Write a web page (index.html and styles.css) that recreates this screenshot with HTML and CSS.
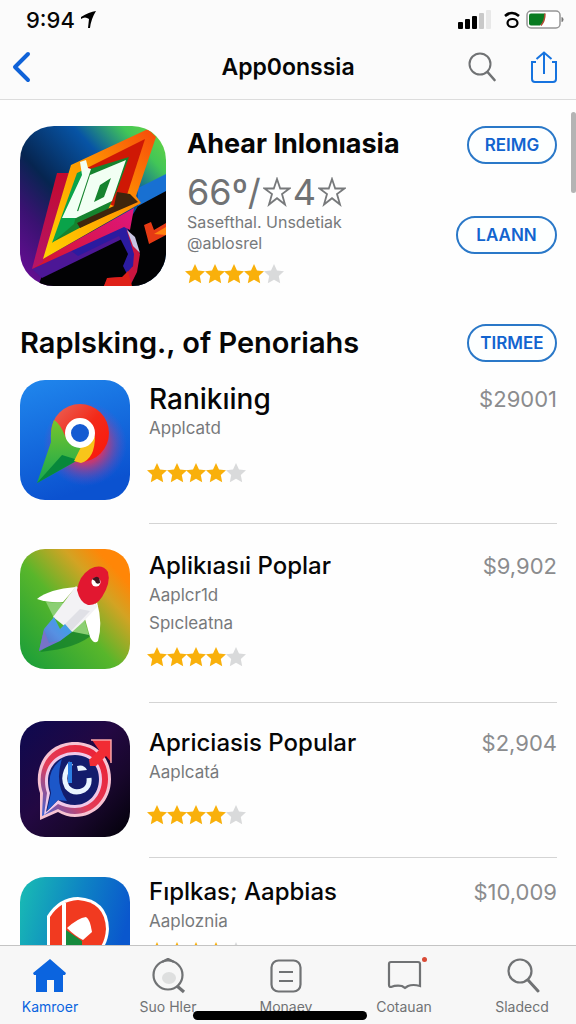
FILE: index.html
```
<!DOCTYPE html>
<html lang="id">
<head>
  <meta charset="UTF-8" />
  <meta name="viewport" content="width=device-width, initial-scale=1.0" />
  <title>App0onssia</title>
  <link rel="stylesheet" href="styles.css">
</head>
<body>
  <!-- shared star shapes -->
  <svg class="sprite" aria-hidden="true">
    <symbol id="star" viewBox="0 0 20 20"><path d="M10 0l3 6.500 7 .8-5.200 4.800 1.400 7.200-6.200-3.600-6.200 3.600 1.400-7.200L0 7.300l7-.8z"/></symbol>
    <symbol id="rating" viewBox="0 0 100 20">
      <g fill="#f9b00b">
        <use href="#star" x="0" width="20" height="20"/>
        <use href="#star" x="20" width="20" height="20"/>
        <use href="#star" x="39" width="20" height="20"/>
        <use href="#star" x="59" width="20" height="20"/>
      </g>
      <use href="#star" x="79" width="20" height="20" fill="#d9dadb"/>
    </symbol>
    <symbol id="star-line" viewBox="0 0 28 30"><path d="M14 2l3.200 9.500H26.500L19 17l3 10.500-8-6.300-8 6.300L9 17 1.500 11.500h9.300z" fill="none" stroke="#77797b" stroke-width="1.800"/></symbol>
  </svg>

  <header class="topbar">
    <div class="status">
      <span class="time">9:94</span>
      <svg class="arrow" viewBox="0 0 16 18"><path d="M0 6Q8 1 15 0 10 8 9 17L7 17 8 8Q4 5 0 8z"/></svg>
      <svg class="signal" viewBox="0 0 34 20">
        <rect x="0" y="12" width="5" height="7" rx="1"/>
        <rect x="7" y="9" width="5" height="10" rx="1"/>
        <rect x="14" y="6" width="5" height="13" rx="1"/>
        <rect x="21" y="3" width="5" height="16" rx="1" fill="#c9c9c9"/>
        <rect x="28" y="0" width="5" height="19" rx="1" fill="#e8e8e8"/>
      </svg>
      <svg class="wifi" viewBox="0 0 16 18"><path d="M1 5Q8-1 15 5" fill="none" stroke="#000" stroke-width="2.600"/><ellipse cx="8.500" cy="12" rx="5" ry="4" fill="none" stroke="#000" stroke-width="2.200"/></svg>
      <svg class="battery" viewBox="0 0 38 20">
        <rect x="1" y="1" width="33" height="17" rx="4" fill="#fff" stroke="#969696" stroke-width="1.500"/>
        <path d="M5 3.500H19Q19 12 14 15.500H5Q3 15.500 3 13.500V5.500Q3 3.500 5 3.500z" fill="#087b20"/>
        <path d="M19 3.500Q19 11 15 15.500" fill="none" stroke="#b04a32" stroke-width="1.500"/>
        <path d="M35.500 7v5q2 0 2-2.500t-2-2.500z" fill="#777"/>
      </svg>
    </div>
    <div class="navbar">
      <button class="icon-btn back" aria-label="Back">
        <svg viewBox="0 0 20 32"><path d="M16 3L3 16l13 13" fill="none" stroke="#0f62d8" stroke-width="4" stroke-linecap="round" stroke-linejoin="round"/></svg>
      </button>
      <h1>App0onssia</h1>
      <button class="icon-btn" aria-label="Search">
        <svg viewBox="0 0 28 30"><circle cx="12" cy="12" r="10.500" fill="none" stroke="#707274" stroke-width="2"/><path d="M19.500 20l7 8" stroke="#707274" stroke-width="2.600" stroke-linecap="round"/></svg>
      </button>
      <button class="icon-btn share" aria-label="Share">
        <svg viewBox="0 0 28 32"><path d="M6 11H2V28Q2 31 5 31H23Q26 31 26 28V11H22M14 23V2M6.500 8L14 1.500 21.500 8" fill="none" stroke="#1673df" stroke-width="2"/></svg>
      </button>
    </div>
  </header>

  <main class="content">
    <section class="hero">
      <svg class="hero-icon" viewBox="0 0 146 160">
        <defs>
          <linearGradient id="hBg" x1="0" y1="1" x2="1" y2="0"><stop offset="0" stop-color="#700c9b"/><stop offset=".25" stop-color="#3a1272"/><stop offset=".42" stop-color="#062550"/><stop offset=".68" stop-color="#0754a5"/><stop offset=".85" stop-color="#42c657"/><stop offset="1" stop-color="#70d73c"/></linearGradient>
          <linearGradient id="hRed" x1="0" y1="0" x2="0" y2="1"><stop offset="0" stop-color="#c30a2d"/><stop offset="1" stop-color="#b51469"/></linearGradient>
          <linearGradient id="hYel" x1="0" y1="1" x2="1" y2="0"><stop offset="0" stop-color="#ffd500"/><stop offset=".5" stop-color="#ff9f00"/><stop offset="1" stop-color="#f7490b"/></linearGradient>
          <linearGradient id="hPink" x1="0" y1="1" x2="1" y2="0"><stop offset="0" stop-color="#d41526"/><stop offset="1" stop-color="#df1680"/></linearGradient>
          <clipPath id="hClip"><rect width="146" height="160" rx="34"/></clipPath>
        </defs>
        <g clip-path="url(#hClip)">
          <rect width="146" height="160" fill="url(#hBg)"/>
          <path d="M146 48L118 62V82L146 70z" fill="#1870d2"/>
          <path d="M146 65L118 80 100 110 22 150 18 160H146z" fill="#020204"/>
          <path d="M12 143L104 98V112L22 152z" fill="#4c1796"/>
          <path d="M50 124L106 98 118 130 108 150 103 140 108 128 99 110 58 130z" fill="#2b1ba0"/>
          <path d="M106 102L120 128 117 146 110 160H84L88 152 103 151 113 140 114 128z" fill="#c81540"/>
          <path d="M84 160L87 152 102 151 108 145 112 160z" fill="#df2018"/>
          <path d="M12 143L23 133 114 82 110 104 104 101z" fill="url(#hPink)"/>
          <path d="M37 47H49L23 136 12 143z" fill="url(#hRed)"/>
          <path d="M51 39L128 3 136 11 116 70 121 77 23 133z" fill="url(#hYel)"/>
          <path d="M63 44L125 13 106 72 98 82 85 76z" fill="#cf1805"/>
          <path d="M60 46L109 31 97 64 86 88 33 116z" fill="#15832e"/>
          <path d="M57 47L68 42 54 98 32 117z" fill="#0aa34a"/>
          <path d="M97 66L110 68 118 76 88 89 60 102 57 97 94 80z" fill="#3e250c"/>
          <path d="M60 36L66 34 68 42 71 43 57 85 62 86 56 92 42 92 62 49z" fill="#f1fff3"/>
          <path fill-rule="evenodd" d="M70 49L106 34 92 75 56 92zM80 59L74 76 84 71 91 52z" fill="#f1fff3"/>
          <path d="M107 104l8 7 5 16-7-7z" fill="#c9c4e3"/>
          <path d="M124 99l7-3 3 8 12-7v12l-17 9z" fill="#e63a14"/><path d="M134 108l12-7v8z" fill="#ff820e"/>
        </g>
      </svg>
      <div class="hero-text">
        <h2>Ahear Inlonıasia</h2>
        <p class="score">66º/ <svg><use href="#star-line"/></svg>4<svg><use href="#star-line"/></svg></p>
        <p class="sub">Sasefthal. Unsdetiak</p>
        <p class="sub">@ablosrel</p>
        <svg class="rating" role="img" aria-label="4 / 5"><use href="#rating"/></svg>
      </div>
      <div class="hero-actions">
        <button class="pill">REIMG</button>
        <button class="pill wide">LAANN</button>
      </div>
    </section>

    <div class="section-head">
      <h2>Raplsking., of Penoriahs</h2>
      <button class="pill">TIRMEE</button>
    </div>

    <article class="app first">
      <svg class="app-icon" viewBox="0 0 110 120">
        <defs>
          <linearGradient id="aBg" x1="0" y1="0" x2=".3" y2="1"><stop offset="0" stop-color="#2087ed"/><stop offset="1" stop-color="#0b52d0"/></linearGradient>
          <radialGradient id="aGlow"><stop offset=".45" stop-color="#f0305a" stop-opacity=".8"/><stop offset="1" stop-color="#6d4fca" stop-opacity="0"/></radialGradient>
          <linearGradient id="aRed" x1="0" y1="0" x2="1" y2="1"><stop offset="0" stop-color="#e9675b"/><stop offset=".5" stop-color="#f32a19"/><stop offset="1" stop-color="#fb1608"/></linearGradient>
          <linearGradient id="aGreen" x1="0" y1="0" x2="0" y2="1"><stop offset="0" stop-color="#77c62b"/><stop offset="1" stop-color="#15a650"/></linearGradient>
        </defs>
        <rect width="110" height="120" rx="25" fill="url(#aBg)"/>
        <circle cx="65" cy="64" r="42" fill="url(#aGlow)"/>
        <circle cx="60" cy="53" r="29" fill="url(#aRed)"/>
        <path d="M34 40Q40 43 46 58L62 68 58 80 17 103 31 62Q30 50 34 40z" fill="url(#aGreen)"/>
        <path d="M17 103L42 75 58 80z" fill="#07883b"/>
        <path d="M54 81L61 67Q70 66 75 56 75 79 61 83z" fill="#f8c51a"/>
        <circle cx="60" cy="53" r="12" fill="#155bd2" stroke="#fff" stroke-width="6"/>
      </svg>
      <div class="app-body">
        <div class="app-title"><h3>Ranikıing</h3><span class="price">$29001</span></div>
        <p>Applcatd</p>
        <svg class="rating" role="img" aria-label="4 / 5"><use href="#rating"/></svg>
      </div>
    </article>

    <article class="app two-line">
      <svg class="app-icon" viewBox="0 0 110 120">
        <defs>
          <linearGradient id="bBg" x1="0" y1="1" x2="1" y2="0"><stop offset="0" stop-color="#159c3a"/><stop offset=".45" stop-color="#58b62b"/><stop offset=".7" stop-color="#d3a323"/><stop offset=".85" stop-color="#ff8607"/></linearGradient>
          <linearGradient id="bTail" x1="1" y1="0" x2="0" y2="1"><stop offset="0" stop-color="#30a8ed"/><stop offset=".5" stop-color="#5790e2"/><stop offset="1" stop-color="#5265bd"/></linearGradient>
        </defs>
        <rect width="110" height="120" rx="25" fill="url(#bBg)"/>
        <path d="M20 103L48 80 73 85Q58 99 20 103z" fill="#0b782b" opacity=".65"/>
        <path d="M26 53L44 54 34 69zM64 69L69 86 49 82z" fill="#8bcf73"/>
        <path d="M17 50Q29 40 56 38L43 53Q29 54 17 50z" fill="#fff"/>
        <path d="M77 53Q83 75 78 92 74 96 70 88L65 70z" fill="#fff"/>
        <path d="M56 37L78 57 63 73 52 83 33 68z" fill="#f3f2f5"/>
        <path d="M70 62L51 82 44 76 60 60z" fill="#e0e0e6"/>
        <path d="M34 68L40 80 45 75 52 83 40 92 19 102 24 80z" fill="url(#bTail)"/>
        <path d="M24 81L29 94 40 91 19 102z" fill="#7773c8"/>
        <path d="M57 41Q59 27 70 20 82 14 88 23 91 34 82 48 76 57 68 56 60 54 57 41z" fill="#e21730"/>
        <circle cx="76" cy="33" r="4.500" fill="#fff"/><path d="M72 30Q80 24 80 34 76 36 75 32z" fill="#40151f"/>
      </svg>
      <div class="app-body">
        <div class="app-title"><h3>Aplikıasıi Poplar</h3><span class="price">$9,902</span></div>
        <p>Aaplcr1d</p>
        <p>Spıcleatna</p>
        <svg class="rating" role="img" aria-label="4 / 5"><use href="#rating"/></svg>
      </div>
    </article>

    <article class="app short">
      <svg class="app-icon" viewBox="0 0 110 116">
        <defs>
          <linearGradient id="cBg" x1="0" y1="0" x2="1" y2="1"><stop offset="0" stop-color="#0d0950"/><stop offset=".45" stop-color="#230842"/><stop offset=".7" stop-color="#18072c"/><stop offset="1" stop-color="#020108"/></linearGradient>
          <linearGradient id="cRing" x1="0" y1="1" x2="1" y2="0"><stop offset="0" stop-color="#3768dc"/><stop offset=".4" stop-color="#e33d58"/><stop offset="1" stop-color="#ec1b30"/></linearGradient>
        </defs>
        <rect width="110" height="116" rx="25" fill="url(#cBg)"/>
        <path d="M20 99L20 72C12 48 26 21 55 21 78 21 91 38 91 58 91 80 75 96 55 96Q46 96 38 91z" fill="#f7c3d2"/>
        <path d="M22 95L23 72C15 50 28 24 55 24 76 24 88 40 88 58 88 78 73 93 55 93Q46 93 38 88z" fill="url(#cRing)"/>
        <path d="M24 94L27 72C20 51 32 31 55 31 73 31 82 44 82 58 82 75 70 87 55 87Q46 87 38 83z" fill="#f0c9e8"/>
        <path d="M26 91L30 72C23 51 35 34 55 34 71 34 79 46 79 58 79 73 68 84 55 84Q46 84 38 79z" fill="#131c6c"/>
        <path d="M27 90L31 72Q25 50 42 38 34 62 47 80L38 79z" fill="#1c57c9"/>
        <path d="M72 19H91V41L86 35 76 45 70 45 69 39 79 29z" fill="#f12c34"/>
        <path d="M71 19H91V42" fill="none" stroke="#f8a5a9" stroke-width="1.500"/>
        <path d="M51 42Q41 55 47 66 54 74 64 69 70 65 69 57" fill="none" stroke="#e9f5ff" stroke-width="5"/>
        <path d="M57 45Q64 43 67 49L58 50z" fill="#e9f5ff"/><path d="M50 41V62" stroke="#2c7fe4" stroke-width="4"/>
      </svg>
      <div class="app-body">
        <div class="app-title"><h3>Apriciasi̇s Popular</h3><span class="price">$2,904</span></div>
        <p>Aaplcatá</p>
        <svg class="rating" role="img" aria-label="4 / 5"><use href="#rating"/></svg>
      </div>
    </article>

    <article class="app last">
      <svg class="app-icon" viewBox="0 0 110 120">
        <defs><linearGradient id="dBg" x1="0" y1="0" x2="1" y2=".3"><stop offset="0" stop-color="#19bdb3"/><stop offset=".55" stop-color="#0e83c4"/><stop offset="1" stop-color="#0a57cd"/></linearGradient></defs>
        <rect width="110" height="120" rx="25" fill="url(#dBg)"/>
        <path d="M27 39Q39 20 58 20 88 22 89 52 87 82 57 84 36 82 27 70z" fill="#fff"/>
        <path d="M30 40Q40 24 58 23 85 25 86 52 84 80 57 81 37 79 30 68z" fill="#f13a20"/>
        <path d="M46 53L62 64 62 81 46 79z" fill="#168a3d"/>
        <path d="M42 26h4v57h-4z" fill="#fff"/>
        <path d="M47 51Q58 41 66 40 70 42 72 55L63 63Q55 59 47 51z" fill="#fff"/>
      </svg>
      <div class="app-body">
        <div class="app-title"><h3>Fıplkas; Aapbias</h3><span class="price">$10,009</span></div>
        <p>Aaploznia</p>
        <svg class="rating" role="img" aria-label="4 / 5"><use href="#rating"/></svg>
      </div>
    </article>
    <div class="scroll-thumb"></div>
  </main>

  <nav class="tabbar">
    <a class="tab active" href="#">
      <svg viewBox="0 0 36 36"><path d="M18 1L34 15 33 17H31V34H22V22H15V34H4V17H2L1 15z" fill="currentColor"/></svg>
      <span>Kamroer</span>
    </a>
    <a class="tab" href="#">
      <svg viewBox="0 0 36 36"><path d="M12 4L18 1 24 4" fill="none" stroke="currentColor" stroke-width="2.400"/><circle cx="18" cy="17" r="14.500" fill="none" stroke="currentColor" stroke-width="2.200"/><ellipse cx="19" cy="20" rx="7" ry="6" fill="#dedfdf"/><path d="M27 28l7 6" stroke="currentColor" stroke-width="3.200"/></svg>
      <span>Suo Hler</span>
    </a>
    <a class="tab" href="#">
      <svg viewBox="0 0 36 36"><rect x="3.500" y="2.500" width="29" height="31" rx="7" fill="none" stroke="currentColor" stroke-width="2.200"/><path d="M11 14h14M11 23h14" stroke="currentColor" stroke-width="2"/></svg>
      <span>Monaey</span>
    </a>
    <a class="tab" href="#">
      <svg viewBox="0 0 36 36"><path d="M5 4H32Q34 4 34 6V28Q27 26 22 28L19 30 16 28Q10 27 5 29 3 29 3 27V6Q3 4 5 4z" fill="none" stroke="currentColor" stroke-width="2.200"/></svg>
      <i class="dot"></i>
      <span>Cotauan</span>
    </a>
    <a class="tab" href="#">
      <svg viewBox="0 0 36 36"><circle cx="16" cy="13" r="11.500" fill="none" stroke="currentColor" stroke-width="2.200"/><path d="M24 22l10 11" stroke="currentColor" stroke-width="3" stroke-linecap="round"/></svg>
      <span>Sladecd</span>
    </a>
    <div class="home-indicator"></div>
  </nav>
</body>
</html>
```
FILE: styles.css
```
* { box-sizing: border-box }
body { font-family: Inter, "Liberation Sans", sans-serif; background: #fefefe; color: #060606; margin: 0; height: 100vh; display: flex; flex-direction: column; overflow: hidden }
h1, h2, h3, p { margin: 0 }
svg { display: block; flex: none }
button { font-family: inherit; cursor: pointer }
.sprite { position: absolute; width: 0; height: 0 }

/* Top bar */
.topbar { flex: none; height: 100px; background: #fbfbfb; border-bottom: 1px solid #dcdcdc }
.status { display: flex; align-items: center; height: 40px; padding: 0 12px 0 26px }
.time { font-size: 22px; font-weight: 500 }
.arrow { width: 16px; height: 18px; margin-left: 6px }
.signal { width: 34px; height: 20px; margin-left: auto }
.wifi { width: 16px; height: 18px; margin: 0 6px 0 12px }
.battery { width: 38px; height: 20px }
.navbar { position: relative; display: flex; align-items: center; height: 54px; padding: 0 18px 0 12px }
.navbar h1 { position: absolute; left: 0; right: 0; text-align: center; font-size: 23px; font-weight: 600; pointer-events: none }
.icon-btn { border: 0; background: none; padding: 0 }
.icon-btn svg { width: 28px; height: 30px }
.icon-btn.back { margin-right: auto }
.icon-btn.back svg { width: 20px; height: 32px }
.icon-btn.share { margin-left: 34px }
.icon-btn.share svg { height: 32px }

/* Content */
.content { position: relative; flex: 1; min-height: 0; overflow: hidden; padding: 26px 19px 0 20px }
.hero { display: flex; gap: 21px }
.hero-icon { width: 146px; height: 160px }
.hero-text { flex: 1; min-width: 0 }
.hero-text h2 { font-size: 27px; line-height: 36px; font-weight: 700; white-space: nowrap }
.score { display: flex; align-items: center; gap: 2px; margin-top: 10px; font-size: 36px; line-height: 40px; color: #707274 }
.score svg { width: 28px; height: 30px }
.sub { font-size: 16px; line-height: 21px; color: #77797b; white-space: nowrap }
.rating { width: 100px; height: 20px; margin-left: -2px }
.hero-text .rating { margin-top: 10px }
.hero-actions { display: flex; flex-direction: column; align-items: flex-end; gap: 52px }
.pill { height: 38px; min-width: 90px; padding: 0 10px; border: 2px solid #2a78c8; border-radius: 19px; background: #fdffff; color: #1264cf; font-size: 17px; font-weight: 600 }
.pill.wide { min-width: 101px }
.section-head { display: flex; align-items: center; justify-content: space-between; margin: 38px 0 18px }
.section-head h2 { font-size: 29px; line-height: 38px; font-weight: 600; white-space: nowrap }

.app { display: flex; gap: 19px; margin-bottom: 25px }
.app-icon { width: 110px; height: 120px }
.app-body { flex: 1; min-width: 0; padding: 4px 0 40px; border-bottom: 1px solid #d4d4d4 }
.app-title { display: flex; justify-content: space-between; align-items: center; line-height: 30px; white-space: nowrap }
.app-title h3 { font-size: 24px; font-weight: 500 }
.app.first h3 { font-size: 28px }
.price { font-size: 22px; color: #8b8c8e }
.app-body p { font-size: 17px; line-height: 28px; color: #77797b }
.app-body .rating { margin-top: 21px }
.app.two-line { margin-bottom: 18px }
.app.two-line .app-body { padding: 2px 0 35px }
.app.two-line .rating { margin-top: 10px }
.app.short { margin-bottom: 19px }
.app.short .app-icon { height: 116px }
.app.short .app-body { padding: 7px 0 32px }
.app.short .rating { margin-top: 19px }
.app.last .app-body { padding-top: 0 }
.app.last .rating { margin-top: 7px }
.scroll-thumb { position: absolute; top: 12px; right: 0; width: 5px; height: 81px; border-radius: 3px; background: #b4b4b4 }

/* Tab bar */
.tabbar { position: relative; flex: none; display: flex; justify-content: space-between; height: 79px; padding: 12px 26px 0 22px; background: #f7f7f7; border-top: 1px solid #c4c4c4 }
.tab { position: relative; width: 56px; display: flex; flex-direction: column; align-items: center; color: #707274; text-decoration: none; font-size: 14px; line-height: 20px; white-space: nowrap }
.tab svg { width: 36px; height: 36px; margin-bottom: 3px }
.tab.active { color: #0b64df }
.dot { position: absolute; top: -1px; right: 5px; width: 5px; height: 5px; border-radius: 50%; background: #d94a36 }
.home-indicator { position: absolute; left: 50%; bottom: 4px; width: 174px; height: 9px; margin-left: -95px; border-radius: 5px; background: #000 }
```
